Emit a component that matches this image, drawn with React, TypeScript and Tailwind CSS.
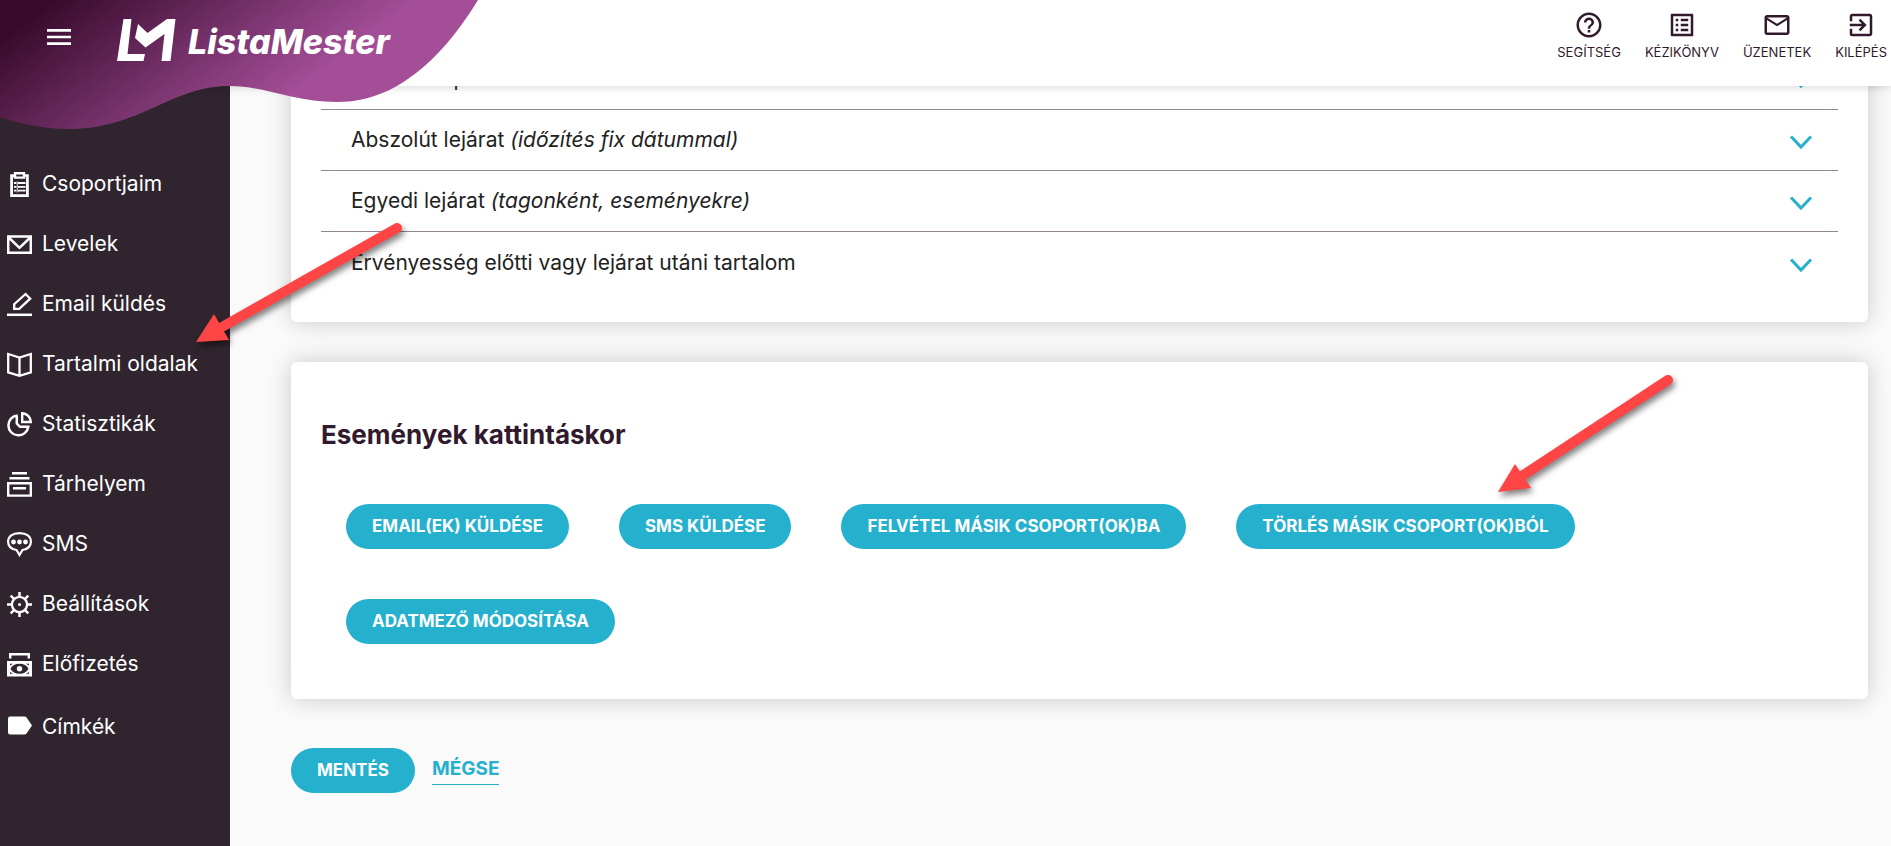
import type { ReactNode } from 'react';
import { MdExitToApp, MdHelpOutline, MdListAlt, MdMailOutline, MdMenu } from 'react-icons/md';

interface MenuItem {
  label: string;
  icon: ReactNode;
}

const menuItems: MenuItem[] = [
  {
    label: 'Csoportjaim',
    icon: (
      <>
        <path d="M4.6 3.6h15.8v20H4.6z" strokeWidth="2.8" />
        <path d="M8 1.2h9v4.4H8z" fill="#30252e" strokeWidth="2.4" />
        <path d="M7 11h2.500M11 11h7.500M7 14.800h2.500M11 14.800h7.500M7 18.600h2.500M11 18.600h7.500" strokeWidth="1.800" />
        <path d="M10.300 9.500v11" strokeWidth="0.800" />
      </>
    ),
  },
  {
    label: 'Levelek',
    icon: <path d="M1.200 4.400h22.600v16.400H1.200zM1.200 5l11.300 10.800L23.800 5" strokeWidth="2.500" />,
  },
  {
    label: 'Email küldés',
    icon: (
      <>
        <path d="M7.200 16.800v-4.600L18.600 2l4.600 4.600-11 10.200z" strokeWidth="2.300" />
        <path d="M0 22.800h25" strokeWidth="2.500" />
      </>
    ),
  },
  {
    label: 'Tartalmi oldalak',
    icon: <path d="M1.200 2l11.300 3.600L23.800 2v18.400l-11.300 3.400L1.200 20.400zM12.500 5.600v18" strokeWidth="2.300" />,
  },
  {
    label: 'Statisztikák',
    icon: (
      <>
        <path d="M10.500 3.400a10 10 0 1 0 10.800 11.400H13L9.800 11.500V3.500" strokeWidth="2.500" />
        <path d="M15.200 1.200v8.800H23.800A9 9 0 0 0 15.200 1.200z" strokeWidth="2.400" />
      </>
    ),
  },
  {
    label: 'Tárhelyem',
    icon: (
      <path d="M5 1.200h15M2.500 6.200h20M1.200 11.200h22.600v12.400H1.200zM6 16.200h13" strokeWidth="2.400" />
    ),
  },
  {
    label: 'SMS',
    icon: (
      <>
        <path
          d="M9.500 18C4.500 17.200 1.100 14.200 1.100 9.800 1.100 4.500 5.500 1.100 12.500 1.100s11.400 3.400 11.400 8.700c0 4.400-3.400 7.400-8.400 8.200l-3 5z"
          strokeWidth="2.200"
        />
        <path d="M6.500 10h.01M12.500 10h.01M18.500 10h.01" strokeWidth="4.800" strokeLinecap="round" />
      </>
    ),
  },
  {
    label: 'Beállítások',
    icon: (
      <>
        <circle cx="12.500" cy="12.500" r="7.600" strokeWidth="2.300" />
        <path
          d="M12.500 0v5M12.500 20v5M0 12.500h5M20 12.500h5M3.700 3.700l3.500 3.500M17.800 17.800l3.500 3.500M3.700 21.300l3.500-3.500M17.800 7.200l3.500-3.500"
          strokeWidth="2.500"
        />
        <path d="M12.500 12.500h.01" strokeWidth="3" strokeLinecap="round" />
      </>
    ),
  },
  {
    label: 'Előfizetés',
    icon: (
      <>
        <path d="M3.200 6.500V2.200h18.600v4.300" strokeWidth="2.400" />
        <path d="M0 9h25v15.500H0z" fill="#fff" stroke="none" />
        <path d="M3.500 16.700q2.500-5 9-5t9 5q-2.500 5-9 5t-9-5z" fill="#30252e" stroke="none" />
        <path d="M3 11.700h3L3 13.500zM22 11.700h-3l3 1.800zM3 21.800h3L3 20zM22 21.800h-3l3-1.800z" fill="#30252e" stroke="none" />
        <path d="M12.500 16.700h.01" strokeWidth="5.400" strokeLinecap="round" />
      </>
    ),
  },
  {
    label: 'Címkék',
    icon: (
      <path
        d="M3 1.500h14.500q1.200 0 2 1L25 10.500l-5.500 8q-.8 1-2 1H3q-2 0-2-2v-14q0-2 2-2z"
        fill="#fff"
        stroke="none"
      />
    ),
  },
];

const topLinks = [
  { label: 'SEGÍTSÉG', Icon: MdHelpOutline },
  { label: 'KÉZIKÖNYV', Icon: MdListAlt },
  { label: 'ÜZENETEK', Icon: MdMailOutline },
  { label: 'KILÉPÉS', Icon: MdExitToApp },
];

const sections = [
  { title: 'Relatív időpont', note: '' },
  { title: 'Abszolút lejárat', note: '(időzítés fix dátummal)' },
  { title: 'Egyedi lejárat', note: '(tagonként, eseményekre)' },
  { title: 'Érvényesség előtti vagy lejárat utáni tartalom', note: '' },
];

const clickEvents = [
  'EMAIL(EK) KÜLDÉSE',
  'SMS KÜLDÉSE',
  'FELVÉTEL MÁSIK CSOPORT(OK)BA',
  'TÖRLÉS MÁSIK CSOPORT(OK)BÓL',
  'ADATMEZŐ MÓDOSÍTÁSA',
];

function PillButton({ children }: { children: ReactNode }) {
  return (
    <button
      type="button"
      className="h-[45px] rounded-full bg-[#25b0ce] px-[26px] text-[17px] font-bold text-white hover:bg-[#1f9cb7]"
    >
      {children}
    </button>
  );
}

function Chevron() {
  return (
    <svg className="mt-1" width="24" height="16" viewBox="0 0 24 16" fill="none" stroke="#25b0ce" strokeWidth="3">
      <path d="M2 2.500l10 10.500 10-10.500" />
    </svg>
  );
}

function Logo() {
  return (
    <a href="#" className="flex items-end gap-[11px] text-white">
      <svg width="60" height="44" viewBox="0 0 60 44" fill="#fff">
        <path d="M6.500 1h8L10.500 36H28l-1.500 7H0z" />
        <path d="M21 6l9.500 9L50 1h8.500L53.500 43h-9L47.500 16 28.500 29.500 18 20z" />
      </svg>
      <span className="text-[34px] leading-[40px] font-extrabold italic">ListaMester</span>
    </a>
  );
}

function Header() {
  return (
    <header className="relative z-10 flex h-[86px] items-start justify-between bg-white shadow-[0_0_10px_rgba(0,0,0,0.2)]">
      <svg className="absolute top-0 left-0" width="480" height="132" viewBox="0 0 480 132">
        <defs>
          <linearGradient id="wave" gradientUnits="userSpaceOnUse" x1="20" y1="27" x2="150" y2="200">
            <stop offset="0" stopColor="#380b2d" />
            <stop offset="1" stopColor="#a34e97" />
          </linearGradient>
        </defs>
        <path
          d="M0 0H478C456 36 431 66 397 86 375 98 357 102 337 102 293 102 264 86 230 86 170 86 141 129 68 129 42 129 18 123 0 117z"
          fill="url(#wave)"
        />
      </svg>
      <div className="relative flex items-start gap-[42px] pt-[18px] pl-[43px]">
        <button type="button" aria-label="Menü" className="pt-[3px] text-white">
          <MdMenu size={32} />
        </button>
        <Logo />
      </div>
      <nav className="flex gap-6 pt-[10px] pr-1">
        {topLinks.map(({ label, Icon }) => (
          <a key={label} href="#" className="flex flex-col items-center text-[13px] leading-6 text-[#321a2e]">
            <Icon size={30} />
            {label}
          </a>
        ))}
      </nav>
    </header>
  );
}

function Sidebar() {
  return (
    <aside className="w-[230px] shrink-0 bg-[#30252e] pt-[68px]">
      <ul>
        {menuItems.map(({ label, icon }) => (
          <li key={label} className="last:pt-[3px]">
            <a href="#" className="flex h-[60px] items-center gap-[10px] pl-[7px] text-[21px] text-white">
              <svg width="25" height="25" viewBox="0 0 25 25" fill="none" stroke="#fff">
                {icon}
              </svg>
              {label}
            </a>
          </li>
        ))}
      </ul>
    </aside>
  );
}

interface ArrowProps {
  className: string;
  width: number;
  height: number;
  shaft: string;
  head: string;
}

// red annotation arrow, the tip is at the lower left
function Arrow({ className, width, height, shaft, head }: ArrowProps) {
  return (
    <svg
      className={className}
      width={width}
      height={height}
      viewBox={`0 0 ${width} ${height}`}
      fill="#fe4545"
    >
      <path d={shaft} stroke="#fe4545" strokeWidth="10" strokeLinecap="round" />
      <path d={head} />
    </svg>
  );
}

export default function App() {
  return (
    <div className="relative flex h-screen flex-col overflow-hidden bg-[#fafafa] font-['Inter','Liberation_Sans',sans-serif] text-[#222]">
      <Header />
      <div className="flex min-h-0 flex-1">
        <Sidebar />
        <main className="min-w-0 flex-1 overflow-hidden pr-[23px] pl-[61px]">
          <section className="-mt-[37px] rounded-md bg-white px-[30px] pb-[29px] shadow-[0_0_25px_rgba(0,0,0,0.2)]">
            {sections.map(({ title, note }) => (
              <button
                key={title}
                type="button"
                className="flex h-[61px] w-full items-center justify-between border-b border-[#92868f] pr-[25px] pl-[30px] text-left text-[21px] last:border-b-0"
              >
                <span>
                  {title} {note && <em>{note}</em>}
                </span>
                <Chevron />
              </button>
            ))}
          </section>

          <section className="mt-10 rounded-md bg-white p-[30px] shadow-[0_0_25px_rgba(0,0,0,0.2)]">
            <h2 className="pt-[27px] pb-[28px] text-[26px] leading-8 font-bold text-[#321a2e]">
              Események kattintáskor
            </h2>
            <div className="flex flex-wrap gap-[50px] p-[25px]">
              {clickEvents.map((label) => (
                <PillButton key={label}>{label}</PillButton>
              ))}
            </div>
          </section>

          <div className="mt-[49px] flex items-start gap-[17px]">
            <PillButton>MENTÉS</PillButton>
            <a href="#" className="border-b border-[#25b0ce] pt-[6px] text-[19px] leading-[30px] font-bold text-[#25b0ce]">
              MÉGSE
            </a>
          </div>
        </main>
      </div>

      <Arrow
        className="pointer-events-none absolute top-[220px] left-[190px] z-20 drop-shadow-[2px_4px_3px_rgba(0,0,0,0.5)]"
        width={220}
        height={135}
        shaft="M207 8L32 107"
        head="M6 122L24 94 39 120z"
      />
      <Arrow
        className="pointer-events-none absolute top-[370px] right-[211px] z-20 drop-shadow-[2px_4px_3px_rgba(0,0,0,0.5)]"
        width={190}
        height={135}
        shaft="M178 10L32 106"
        head="M8 122L25 94 41 118z"
      />
    </div>
  );
}
